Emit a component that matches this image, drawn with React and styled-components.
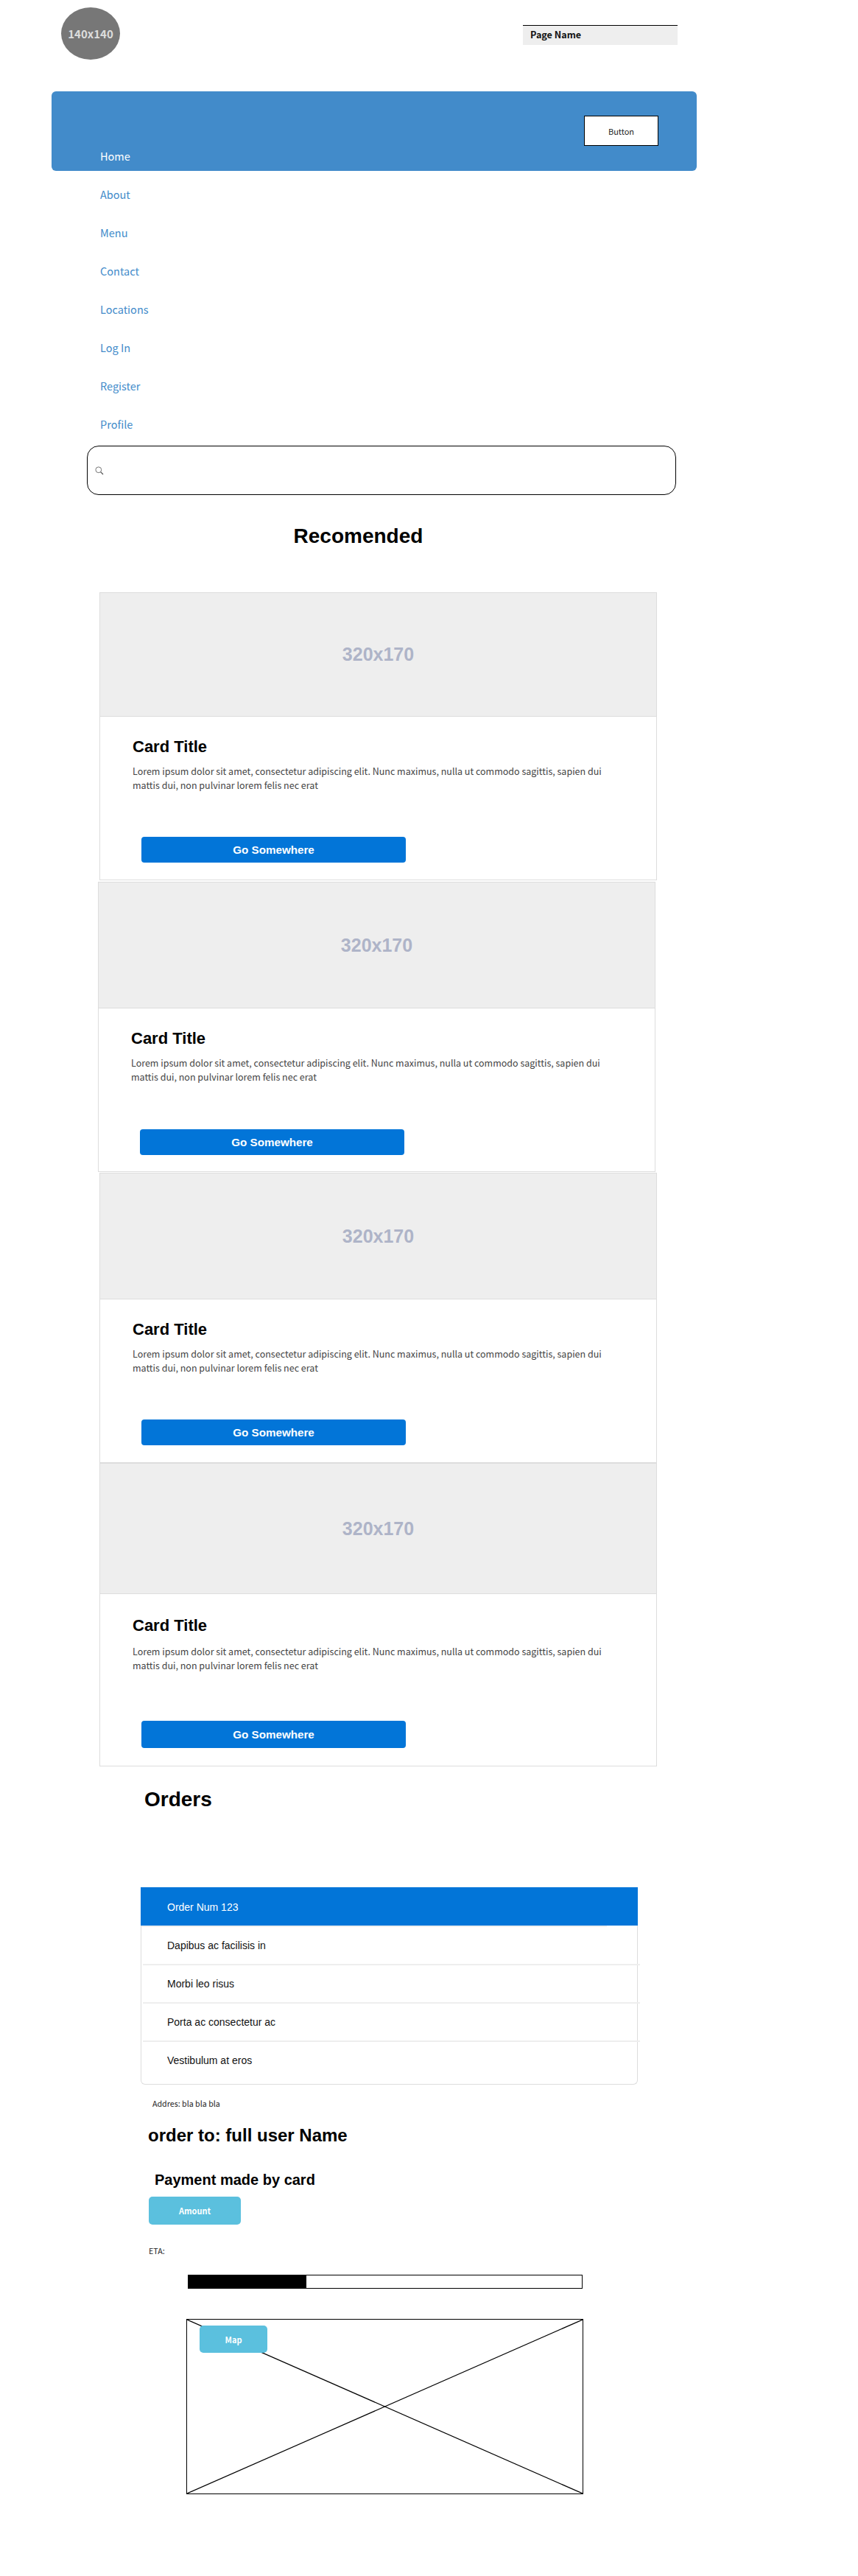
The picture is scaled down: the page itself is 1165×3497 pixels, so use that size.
import styled, { createGlobalStyle } from 'styled-components';

const source = '"Noto Sans CJK JP", "Noto Sans", sans-serif';
const arial = '"Liberation Sans", Arial, sans-serif';

const GlobalStyle = createGlobalStyle`
    * {
        box-sizing: border-box;
    }

    body {
        margin: 0;
        background: #fff;
        font-family: ${source};
    }
`;

const cards = [
    { left: 135, top: 0, imageHeight: 168, buttonGap: 61, bottom: 23 },
    { left: 133, top: 2, imageHeight: 171, buttonGap: 62, bottom: 22 },
    { left: 135, top: 1, imageHeight: 171, buttonGap: 61, bottom: 23 },
    { left: 135, top: 0, imageHeight: 177, bodyTop: 30, textGap: 12, buttonGap: 66, buttonHeight: 37, bottom: 24 },
];

const links = ['Home', 'About', 'Menu', 'Contact', 'Locations', 'Log In', 'Register', 'Profile'];
const orders = ['Order Num 123', 'Dapibus ac facilisis in', 'Morbi leo risus', 'Porta ac consectetur ac', 'Vestibulum at eros'];

function Card({ left, top, imageHeight, bodyTop = 28, textGap = 10, buttonGap, buttonHeight = 35, bottom }) {
    return (
        <CardBox $left={left} $top={top}>
            <CardImage $height={imageHeight}>320x170</CardImage>
            <CardBody $top={bodyTop} $bottom={bottom}>
                <CardTitle>Card Title</CardTitle>
                <CardText $gap={textGap}>
                    Lorem ipsum dolor sit amet, consectetur adipiscing elit. Nunc maximus, nulla ut commodo sagittis, sapien dui mattis dui, non pulvinar lorem felis nec erat
                </CardText>
                <CardButton $gap={buttonGap} $height={buttonHeight}>Go Somewhere</CardButton>
            </CardBody>
        </CardBox>
    );
}

function App() {
    return (
        <Page>
            <GlobalStyle />
            <Header>
                <Avatar>140x140</Avatar>
                <PageName>Page Name</PageName>
            </Header>
            <Banner>
                <BannerButton>Button</BannerButton>
            </Banner>
            <Nav>
                {links.map((link, i) => (
                    <NavLink key={link} $active={i === 0}>{link}</NavLink>
                ))}
            </Nav>
            <Search>
                <svg width="12" height="12" viewBox="0 0 12 12" fill="none">
                    <circle cx="4.8" cy="4.8" r="3.9" stroke="#777" strokeWidth="1" />
                    <path d="M7.6 7.6 L11 11" stroke="#555" strokeWidth="1.3" />
                </svg>
            </Search>
            <Recommended>Recomended</Recommended>
            {cards.map((card, i) => (
                <Card key={i} {...card} />
            ))}
            <OrdersTitle>Orders</OrdersTitle>
            <OrderList>
                {orders.map((order, i) => (
                    <OrderItem key={order} $active={i === 0} $last={i === orders.length - 1}>{order}</OrderItem>
                ))}
            </OrderList>
            <Address>Addres: bla bla bla</Address>
            <OrderTo>order to: full user Name</OrderTo>
            <Payment>Payment made by card</Payment>
            <InfoButton>Amount</InfoButton>
            <Eta>ETA:</Eta>
            <Progress>
                <ProgressFill style={{ width: '30%' }} />
            </Progress>
            <MapBox>
                <MapCross viewBox="0 0 100 100" preserveAspectRatio="none">
                    <line x1="0" y1="0" x2="100" y2="100" vectorEffect="non-scaling-stroke" />
                    <line x1="100" y1="0" x2="0" y2="100" vectorEffect="non-scaling-stroke" />
                </MapCross>
                <MapButton>Map</MapButton>
            </MapBox>
        </Page>
    );
}

const Page = styled.div`
    width: 1165px;
    height: 3497px;
    overflow: hidden;
`;

const Header = styled.header`
    display: flex;
    justify-content: space-between;
    align-items: flex-start;
    height: 124px;
    padding: 10px 245px 0 83px;
`;

const Avatar = styled.div`
    display: flex;
    align-items: center;
    justify-content: center;
    width: 80px;
    height: 71px;
    border-radius: 50%;
    background: #777;
    color: #ddd;
    font-size: 15px;
    font-weight: 700;
`;

const PageName = styled.div`
    width: 210px;
    height: 27px;
    margin-top: 24px;
    padding-left: 10px;
    background: #eee;
    border-top: 1px solid #000;
    color: #111;
    font-size: 12.6px;
    font-weight: 700;
    line-height: 24px;
`;

const Banner = styled.div`
    display: flex;
    justify-content: flex-end;
    align-items: flex-start;
    width: 876px;
    height: 108px;
    margin-left: 70px;
    padding: 33px 52px 0 0;
    background: #428bca;
    border-radius: 6px;
`;

const BannerButton = styled.button`
    width: 101px;
    height: 41px;
    padding: 0;
    background: #fff;
    border: 1px solid #000;
    color: #222;
    font-family: ${source};
    font-size: 11px;
`;

const Nav = styled.nav`
    position: relative;
    display: flex;
    flex-direction: column;
    margin-top: -46px;
    padding-left: 136px;
`;

const NavLink = styled.a`
    height: 52px;
    color: ${props => (props.$active ? '#fff' : '#428bca')};
    font-size: 14.5px;
    line-height: 52px;
`;

const Search = styled.div`
    display: flex;
    align-items: center;
    width: 800px;
    height: 67px;
    margin: 3px 0 0 118px;
    padding-left: 10px;
    border: 1px solid #000;
    border-radius: 16px;
`;

const Recommended = styled.h1`
    width: 973px;
    margin: 40px 0 60px;
    color: #000;
    font-family: ${arial};
    font-size: 28px;
    font-weight: 700;
    line-height: 32px;
    text-align: center;
`;

const CardBox = styled.article`
    width: 757px;
    margin: ${props => props.$top}px 0 0 ${props => props.$left}px;
    border: 1px solid #ddd;
`;

const CardImage = styled.div`
    display: flex;
    align-items: center;
    justify-content: center;
    height: ${props => props.$height}px;
    background: #eee;
    border-bottom: 1px solid #ddd;
    color: #aeb4c8;
    font-family: ${arial};
    font-size: 25px;
    font-weight: 700;
`;

const CardBody = styled.div`
    padding: ${props => props.$top}px 50px ${props => props.$bottom}px 44px;
`;

const CardTitle = styled.h2`
    margin: 0;
    color: #000;
    font-family: ${arial};
    font-size: 22px;
    font-weight: 700;
    line-height: 26px;
`;

const CardText = styled.p`
    margin: ${props => props.$gap}px 0 0;
    color: #444;
    font-size: 12.5px;
    line-height: 19px;
`;

const CardButton = styled.button`
    display: block;
    width: 359px;
    height: ${props => props.$height}px;
    margin: ${props => props.$gap}px 0 0 12px;
    padding: 0;
    background: #0275d8;
    border: 0;
    border-radius: 4px;
    color: #fff;
    font-family: ${arial};
    font-size: 15.2px;
    font-weight: 700;
`;

const OrdersTitle = styled.h1`
    margin: 29px 0 103px 196px;
    color: #000;
    font-family: ${arial};
    font-size: 28px;
    font-weight: 700;
    line-height: 32px;
`;

const OrderList = styled.ul`
    width: 675px;
    height: 268px;
    margin: 0 0 0 191px;
    padding: 0;
    border: 1px solid #ddd;
    border-top: 0;
    border-radius: 0 0 6px 6px;
    list-style: none;
`;

const OrderItem = styled.li`
    position: relative;
    height: 52px;
    margin: ${props => (props.$active ? '0 -1px' : '0')};
    padding-left: ${props => (props.$active ? 36 : 35)}px;
    background: ${props => (props.$active ? '#0275d8' : 'transparent')};
    color: ${props => (props.$active ? '#fff' : '#111')};
    font-family: ${arial};
    font-size: 14px;
    line-height: 54px;

    &::after {
        content: '';
        display: ${props => (props.$last ? 'none' : 'block')};
        position: absolute;
        left: ${props => (props.$active ? 1 : 2)}px;
        bottom: -2px;
        width: ${props => (props.$active ? 632 : 675)}px;
        height: 2px;
        background: #eee;
    }
`;

const Address = styled.div`
    margin: 18px 0 0 207px;
    color: #222;
    font-size: 10.7px;
    line-height: 16px;
`;

const OrderTo = styled.h2`
    margin: 21px 0 0 201px;
    color: #000;
    font-family: ${arial};
    font-size: 24px;
    font-weight: 700;
    line-height: 28px;
`;

const Payment = styled.h3`
    margin: 34px 0 0 210px;
    color: #000;
    font-family: ${arial};
    font-size: 20px;
    font-weight: 700;
    line-height: 24px;
`;

const InfoButton = styled.button`
    display: block;
    width: 125px;
    height: 38px;
    margin: 11px 0 0 202px;
    padding: 0;
    background: #5bc0de;
    border: 0;
    border-radius: 5px;
    color: #fff;
    font-family: ${source};
    font-size: 11px;
    font-weight: 700;
`;

const Eta = styled.div`
    margin: 28px 0 0 202px;
    color: #222;
    font-size: 10.7px;
    line-height: 16px;
`;

const Progress = styled.div`
    width: 536px;
    height: 19px;
    margin: 24px 0 0 255px;
    background: #fff;
    border: 1px solid #000;
`;

const ProgressFill = styled.div`
    height: 100%;
    background: #000;
`;

const MapBox = styled.div`
    position: relative;
    width: 539px;
    height: 238px;
    margin: 41px 0 0 253px;
    padding: 8px 0 0 17px;
    border: 1px solid #000;
`;

const MapCross = styled.svg`
    position: absolute;
    inset: 0;
    width: 100%;
    height: 100%;

    line {
        stroke: #000;
        stroke-width: 1.2;
    }
`;

const MapButton = styled.button`
    position: relative;
    display: block;
    width: 92px;
    height: 37px;
    padding: 0;
    background: #5bc0de;
    border: 0;
    border-radius: 5px;
    color: #fff;
    font-family: ${source};
    font-size: 11px;
    font-weight: 700;
`;

export default App;
